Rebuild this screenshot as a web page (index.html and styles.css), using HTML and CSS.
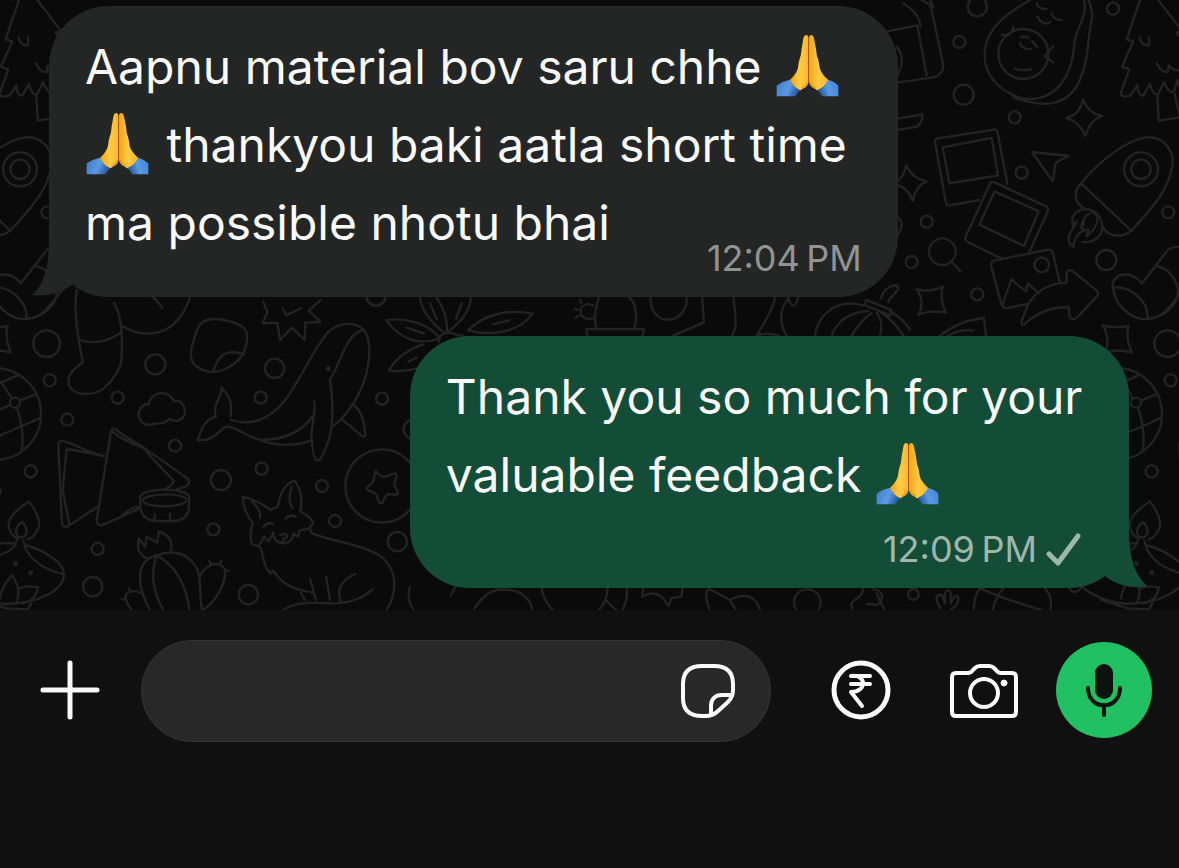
FILE: index.html
```html
<!DOCTYPE html>
<html lang="gu-Latn">
<head>
    <meta charset="UTF-8">
    <meta name="viewport" content="width=device-width, initial-scale=1.0">
    <title>Chat</title>
    <link rel="stylesheet" href="styles.css">
</head>
<body>
    <!-- shared shapes -->
    <svg class="defs" aria-hidden="true">
        <defs>
            <linearGradient id="skin" x1="0" y1="0" x2="1" y2="0">
                <stop offset="0" stop-color="#f5a214"/>
                <stop offset="0.5" stop-color="#ffcb45"/>
                <stop offset="1" stop-color="#fdb827"/>
            </linearGradient>
            <linearGradient id="sleeve-left" x1="0" y1="0" x2="1" y2="0.3">
                <stop offset="0" stop-color="#3f7ac9"/>
                <stop offset="0.6" stop-color="#5b9ae3"/>
                <stop offset="1" stop-color="#28589b"/>
            </linearGradient>
            <linearGradient id="sleeve-right" x1="1" y1="0" x2="0" y2="0.3">
                <stop offset="0" stop-color="#4580cf"/>
                <stop offset="0.6" stop-color="#5b9ae3"/>
                <stop offset="1" stop-color="#28589b"/>
            </linearGradient>
            <symbol id="folded-hands" viewBox="50 42 188 190">
                <path fill="url(#sleeve-left)" d="M51 197 Q70 184 93 179 L124 211 Q114 218 108 230 H51 Z"/>
                <path fill="url(#sleeve-right)" d="M237 197 Q223 184 205 179 L172 211 Q182 218 188 230 H237 Z"/>
                <path fill="url(#skin)" d="M132 53 Q134 44 141 45 Q147 46 147 55 L147 186 Q145 199 134 205 L123 212 Q100 202 92 180 C105 168 112 155 115 145 Q117 128 120 118 C124 108 125 100 126 88 Z"/>
                <path fill="url(#skin)" d="M163 53 Q161 44 154 45 Q148 46 148 55 L148 186 Q151 199 162 205 L173 212 Q196 202 206 180 C192 168 184 155 181 145 Q179 128 176 118 C172 108 171 100 170 88 Z"/>
                <path fill="none" stroke="#a55a08" stroke-width="3" stroke-linecap="round" d="M147 54 V184"/>
                <path fill="none" stroke="#e08a10" stroke-width="4" stroke-linecap="round" opacity="0.6" d="M143 188 Q139 200 127 205 M152 188 Q157 200 169 205"/>
            </symbol>
        </defs>
    </svg>

    <main class="chat">
        <svg class="wallpaper" viewBox="0 0 3537 1830" preserveAspectRatio="xMinYMin slice" aria-hidden="true">
            <g id="tile">
                <!-- stocking, sticker, cloud, whale -->
                <g transform="translate(0 870)">
                    <path d="M230 0 C220 70 235 150 249 217 C215 240 200 260 207 285 C216 312 260 318 295 305 C325 290 355 250 364 215 C368 140 366 80 342 38 M241 150 Q300 170 362 128 M365 108 C440 150 530 140 570 22 M440 10 Q470 25 487 54"/>
                    <path d="M610 95 C630 82 660 85 700 97 C735 108 745 125 741 150 C735 195 720 215 670 240 C640 252 600 245 580 220 C568 200 572 180 580 155 C588 130 592 105 610 95 Z M640 245 C655 190 680 178 733 192"/>
                    <path d="M790 36 L802 66 L788 100 L832 98 L840 150 L876 113 L914 150 L916 98 L962 96 L926 62 L962 30 M848 55 L858 76 L904 54"/>
                    <path d="M430 400 C405 380 415 345 446 342 C455 300 510 300 522 334 C555 325 570 380 535 392 C520 395 515 390 510 386 C490 405 470 400 470 400 C455 405 440 406 430 400 Z"/>
                    <path d="M693 390 C770 415 830 370 870 310 C910 250 945 170 985 125 C1020 95 1065 95 1092 120 C1120 160 1112 260 1060 340 C1040 370 1020 395 998 408 M1090 120 C1040 130 1025 210 990 270 M990 270 C1000 340 1005 420 975 480 C955 530 940 520 935 450 C930 410 950 370 942 335 M943 372 C905 430 850 450 780 450 C730 435 700 405 680 410 C650 425 640 455 592 450 C605 420 610 390 648 380 C635 350 665 320 665 292 C680 315 700 325 691 380 M780 450 C830 470 890 468 932 452 M1060 345 C1085 360 1095 400 1096 435 C1090 450 1075 425 1025 388"/>
                    <circle cx="985" cy="236" r="4"/>
                    <!-- paper, drum -->
                    <path d="M312 498 C270 490 220 460 185 452 Q174 452 175 468 L186 700 Q190 715 205 708 L290 652 M312 498 L200 476 L188 600 L208 704 M333 424 L290 690 Q290 710 310 704 L420 655 M333 424 Q338 412 350 420 C390 455 410 455 430 472 L562 565 Q572 578 560 588 L530 598 M338 426 C400 475 430 460 445 492 C480 530 500 550 520 570 C524 582 505 592 495 598 M360 684 Q390 650 420 650"/>
                    <path d="M420 622 C425 592 560 590 568 622 L566 660 Q560 692 520 693 H465 Q428 690 421 655 Z M428 632 C430 608 555 606 560 630 C555 655 435 655 428 632 M464 690 V672 M510 690 V670"/>
                    <!-- globe -->
                    <circle cx="-15" cy="372" r="138"/>
                    <circle cx="45" cy="338" r="15"/>
                    <path d="M-60 300 Q0 280 53 256 M0 274 Q22 300 36 326 M59 332 L104 314 M0 358 L32 345 M51 353 Q76 430 64 485 M-80 470 Q40 420 120 384"/>
                    <!-- oil lamp -->
                    <path d="M87 634 C50 660 25 680 26 710 C32 735 42 742 55 744 M87 634 C110 665 118 690 118 705 C110 735 95 745 82 748 M66 696 C45 710 42 735 60 742 C85 742 86 715 66 696 M50 750 C48 775 25 785 0 794 M70 752 C75 790 110 835 192 853 C190 815 130 780 75 765 M192 853 C190 900 120 940 20 942 M0 760 L45 760 M0 925 C5 890 20 875 36 856 C60 890 60 915 48 940 M58 895 C75 888 95 888 114 892 C108 925 90 935 66 940 M-60 930 L20 955 L84 958 L94 940 M-170 800 C-155 880 -80 935 20 942"/>
                    <circle cx="46" cy="820" r="4"/><circle cx="92" cy="848" r="4"/>
                    <!-- cactus -->
                    <path d="M445 806 C405 790 415 765 416 745 L436 770 L440 740 L472 758 L476 724 C510 735 520 760 512 782 M450 960 C405 880 410 810 470 796 C540 770 590 810 598 860 C602 900 600 930 606 960 C650 940 680 870 675 838 C655 810 620 820 598 860 M470 796 C450 850 460 910 490 960 M470 796 C530 830 560 890 568 960 M430 912 C400 895 370 905 378 930 Q385 950 396 960 M632 822 L628 812 M660 822 L664 812 M674 842 L686 842 M390 905 L388 895 M374 928 L364 928"/>
                    <!-- fox -->
                    <path d="M833 650 C840 610 855 580 884 572 C905 600 908 640 900 664 C920 675 938 690 940 700 L928 714 L936 730 M833 650 L810 660 C790 640 750 625 728 620 C730 660 745 680 758 700 C752 720 748 740 756 762 L776 770 L792 740 L806 754 L820 728 M875 590 C865 620 866 640 878 654 M755 635 C775 650 782 665 780 684 M790 712 Q800 694 818 702 M856 686 Q868 672 886 680 M820 728 C820 770 880 770 880 730 L895 740 L898 722 L928 716 M840 735 Q855 728 862 738 Q856 750 850 745 Q852 760 840 757 M776 768 C792 780 785 830 812 850 L820 842 C850 890 890 900 940 908 M936 730 C1000 755 1100 765 1150 805 C1195 850 1190 910 1160 960 M850 960 C890 930 950 940 1000 940 C1060 940 1100 915 1118 898 M930 866 L948 930 M978 860 L990 930 M1066 852 C1020 870 1010 905 1022 934 M903 908 L915 930"/>
                    <!-- star coin -->
                    <circle cx="1146" cy="588" r="110"/>
                    <path d="M1127 542 Q1140 562 1154 560 L1184 550 Q1194 552 1186 570 Q1180 584 1188 596 Q1200 614 1188 614 L1164 612 Q1152 622 1148 638 Q1136 644 1132 620 Q1128 606 1106 602 Q1092 596 1106 588 Q1122 578 1122 562 Z"/>
                    <circle cx="140" cy="161" r="40"/><circle cx="149" cy="271" r="18"/><circle cx="466" cy="223" r="30"/>
                    <circle cx="353" cy="323" r="18"/><circle cx="202" cy="389" r="18"/><circle cx="92" cy="544" r="18"/>
                    <circle cx="525" cy="467" r="18"/><circle cx="824" cy="235" r="29"/><circle cx="782" cy="323" r="18"/>
                    <circle cx="1146" cy="326" r="18"/><circle cx="663" cy="570" r="30"/><circle cx="785" cy="536" r="18"/>
                    <circle cx="966" cy="588" r="18"/><circle cx="1005" cy="693" r="18"/><circle cx="640" cy="718" r="18"/>
                    <circle cx="293" cy="777" r="18"/><circle cx="278" cy="890" r="29"/><circle cx="745" cy="914" r="29"/>
                    <circle cx="1192" cy="755" r="29"/><circle cx="1128" cy="18" r="29"/><circle cx="1240" cy="418" r="29"/>
                    <circle cx="-12" cy="604" r="14"/>
                </g>

                <!-- row between the two bubbles: leaves, pot, flask, pumpkin -->
                <g transform="translate(1140 855)">
                    <path d="M18 106 C80 95 150 120 180 160 C110 185 60 160 18 106 Z M80 128 L132 146 M195 145 C150 110 120 70 120 30 M165 30 C190 70 205 100 200 145 C240 110 275 80 272 30 M150 55 L170 102 M245 55 L228 102 M264 136 C310 90 380 70 458 86 C420 140 340 155 264 136 Z M338 118 L388 106 M178 172 C170 140 215 140 232 150 L246 152 M28 255 Q60 200 130 178 M28 257 Q90 262 140 240 M85 230 L110 218"/>
                    <path d="M648 128 C640 90 650 60 658 34 M745 34 C770 55 772 90 764 128 M622 152 L618 132 H792 L788 152 M640 62 C605 45 590 85 612 98 Q628 106 642 98 M604 55 L600 45 M594 74 L584 72 M596 92 L586 98"/>
                    <path d="M812 34 C805 130 925 125 920 34 M966 34 L972 112 L880 152 M1060 34 C1070 120 1070 130 1056 152 M1186 34 C1180 70 1155 110 1130 150 Q1170 142 1200 154 M1226 40 C1195 70 1200 120 1220 152 M1222 34 Q1240 90 1256 34"/>
                    <path d="M1305 152 C1315 80 1380 40 1450 62 M1355 152 C1370 110 1410 80 1465 78 M1415 152 Q1440 110 1474 84 M1490 84 C1510 110 1505 140 1500 152 M1500 80 Q1545 110 1570 152 M1530 80 Q1570 100 1590 135 M1458 44 L1536 76 L1530 92 L1454 60 Z M1503 40 C1510 10 1540 -5 1555 5 C1560 20 1530 30 1525 52"/>
                </g>

                <!-- row under the outgoing bubble -->
                <g transform="translate(1140 1740)">
                    <path d="M90 20 Q78 60 104 95 M225 22 L212 46 M280 92 Q310 40 350 30 Q440 20 458 90 M484 20 Q490 65 520 92 M684 20 Q680 70 655 90 M678 62 L710 92 M740 20 Q745 60 726 92 M790 25 L786 50 Q820 30 846 52 L866 78 L874 54 L904 50 L908 25 M988 90 Q968 30 990 28 L1050 60 Q1120 25 1140 90 M1050 60 L1068 90 M1418 88 C1400 55 1450 60 1450 25 M1480 28 C1510 30 1515 60 1490 75 L1462 72 M1490 40 L1512 88"/>
                    <circle cx="1282" cy="68" r="40"/>
                    <circle cx="1600" cy="43" r="16"/>
                    <path d="M1682 85 C1665 60 1665 40 1685 45 L1695 70 C1690 30 1705 20 1712 40 V70 C1725 35 1745 45 1730 75 L1705 95 M1782 95 Q1780 50 1800 25 Q1880 60 1985 90 M1838 92 Q1845 50 1870 25 M1995 25 Q2020 50 2010 95"/>
                    <circle cx="2085" cy="18" r="18"/>
                </g>

                <!-- right column: camera, pear, tree, photos, rocket -->
                <g transform="translate(2640 0)">
                    <path d="M70 10 Q118 40 122 80 M22 94 L112 76 L140 226 M122 -2 L152 16 L190 195 Q190 225 160 232 L50 248 M150 0 L160 20 M50 140 Q80 180 52 226 M52 356 L128 343 Q126 380 100 382 L52 390 M52 652 Q78 670 52 706"/>
                    <path d="M450 0 C390 35 320 80 315 150 C305 230 370 285 440 297 C530 300 575 230 582 140 C585 80 625 55 612 0 M400 292 C490 325 565 320 600 240 C630 160 620 130 635 60 Q640 30 625 0 M470 10 Q475 30 500 26 M472 50 Q490 80 510 66 M514 40 Q520 60 545 60 M366 104 L382 106 Q398 100 400 80 M520 138 L494 168 L520 187 M422 112 Q436 106 444 114 M420 128 Q425 150 455 146 M456 124 L472 140 M404 206 Q425 214 452 208"/>
                    <circle cx="430" cy="162" r="75"/>
                    <path d="M780 0 L740 118 L760 124 L726 200 L748 208 L722 280 Q725 295 752 286 L772 256 Q774 290 790 286 L810 252 Q820 292 836 280 L852 246 Q870 290 884 270 L892 240 Q905 290 930 270 M835 0 L905 92 L890 98 L940 160 M778 112 Q785 138 805 136 Q810 130 806 112 M830 190 Q845 220 864 216 L866 196 Q885 220 905 206 M832 284 L836 362 L940 346 M884 282 L900 350"/>
                    <path d="M609 298 Q625 340 666 348 Q630 360 616 408 Q600 365 558 354 Q600 345 609 298 Z M78 496 Q95 535 140 544 Q105 560 98 604 Q85 560 40 552 Q72 535 78 496 Z M456 456 L566 468 L527 488 L518 544 Z"/>
                    <path d="M170 416 L345 388 Q350 388 352 394 L382 552 M170 416 Q162 420 166 430 L198 610 Q200 618 210 616 L298 600 M188 442 L335 414 L354 526 L208 550 Z M333 546 Q340 544 350 550 L500 620 Q506 624 504 632 L448 756 M333 546 L256 712 Q254 722 262 726 L366 776 M344 574 L476 634 L432 738 L298 674 Z"/>
                    <path d="M540 850 L518 758 Q512 746 500 750 L342 782 Q330 788 334 800 L364 912 Q370 926 384 924 L440 912 M368 912 L394 838 L438 874 L444 850 L476 880 M428 974 Q420 970 430 950 C450 880 500 850 560 848 V818 Q562 808 576 812 L650 872 Q658 880 650 890 L590 954 Q572 962 568 948 L566 922 C510 920 470 940 436 970 Q432 976 428 974 Z"/>
                    <circle cx="485" cy="795" r="22"/><circle cx="187" cy="755" r="40"/><path d="M215 786 L242 814"/>
                    <path d="M603 550 C660 480 740 420 800 412 C850 408 880 450 878 490 C870 570 810 630 754 692 Q720 718 685 700 L665 680 M603 550 Q575 580 596 612 L612 626 M603 550 L752 690"/>
                    <circle cx="783" cy="508" r="51"/><circle cx="783" cy="508" r="29"/>
                    <path d="M630 628 C590 625 572 645 578 674 L590 664 C580 690 560 700 568 730 L580 740 C585 700 610 690 625 688 L620 708 Q650 690 654 650 L630 628 C665 640 675 680 660 705 Q640 730 608 726 M630 640 Q605 650 612 675 M610 660 Q595 690 618 690"/>
                    <path d="M700 870 C690 840 715 820 745 824 Q770 830 786 850 L865 748 Q890 735 925 742 M700 870 C710 930 770 965 810 956 C870 945 900 900 893 860 C880 825 855 800 826 798 M706 862 C760 860 805 910 803 952 M810 956 C860 950 880 900 915 866"/>
                    <path d="M110 868 Q150 878 188 860 Q178 895 198 938 Q150 930 116 944 Q136 905 110 868 Z M668 976 Q708 986 746 978 Q735 1010 756 1058 Q710 1045 676 1058 Q692 1015 668 976 Z M176 1010 Q240 960 312 954 L318 1010 M200 1010 Q240 985 278 992"/>
                    <circle cx="292" cy="20" r="29"/><circle cx="238" cy="126" r="18"/><circle cx="251" cy="284" r="30"/>
                    <circle cx="404" cy="352" r="18"/><circle cx="699" cy="26" r="18"/><circle cx="425" cy="518" r="18"/>
                    <circle cx="140" cy="665" r="18"/><circle cx="95" cy="786" r="18"/><circle cx="292" cy="883" r="18"/>
                    <circle cx="679" cy="780" r="30"/><circle cx="865" cy="637" r="18"/>
                </g>
            </g>
            <use href="#tile" x="-3363"/>
            <use href="#tile" x="3363"/>
        </svg>

        <article class="bubble incoming">
            <p>Aapnu material bov saru chhe <svg class="emoji" role="img" aria-label="🙏"><use href="#folded-hands"/></svg><br>
            <svg class="emoji" role="img" aria-label="🙏"><use href="#folded-hands"/></svg> thankyou baki aatla short time<br>
            ma possible nhotu bhai</p>
            <div class="meta"><time datetime="12:04">12:04&#8239;PM</time></div>
            <svg class="tail" viewBox="0 0 60 90" aria-hidden="true">
                <path d="M17 20 V32 C17 58 12 75 0 86 C16 88 28 83 39 77 L50 60 Z"/>
            </svg>
        </article>

        <article class="bubble outgoing">
            <p>Thank you so much for your<br>
            valuable feedback <svg class="emoji" role="img" aria-label="🙏"><use href="#folded-hands"/></svg></p>
            <div class="meta">
                <time datetime="12:09">12:09&#8239;PM</time>
                <svg class="check" viewBox="0 0 36 33" role="img" aria-label="Sent">
                    <path d="M4 21 L13 30 L33 3"/>
                </svg>
            </div>
            <svg class="tail" viewBox="0 0 60 90" aria-hidden="true">
                <path d="M42 10 V32 C42 58 48 75 60 86 C44 90 30 84 19 77 L8 60 Z"/>
            </svg>
        </article>
    </main>

    <form class="composer">
        <button type="button" class="icon-btn" aria-label="Attach">
            <svg class="bold" width="60" height="60" viewBox="0 0 60 60"><path d="M30 3 V57 M3 30 H57"/></svg>
        </button>
        <div class="field">
            <input type="text" aria-label="Message">
            <button type="button" class="icon-btn" aria-label="Stickers">
                <svg width="56" height="56" viewBox="0 0 56 56">
                    <path d="M22 3 H34 C47 3 53 9 53 21 V27 C53 32 52 35 48 39 L38 48 C34 52 30 53 25 53 H22 C9 53 3 47 3 35 V21 C3 9 9 3 22 3 Z M31 51 V43 C31 36 35 32 42 32 H52"/>
                </svg>
            </button>
        </div>
        <div class="actions">
            <button type="button" class="icon-btn" aria-label="Payment">
                <svg class="bold" width="60" height="60" viewBox="0 0 60 60">
                    <circle cx="30" cy="30" r="27"/>
                    <path class="rupee" d="M20 16 H39 M20 24 H39 M20 16 C36 14 36 32 20 32 L31 46"/>
                </svg>
            </button>
            <button type="button" class="icon-btn" aria-label="Camera">
                <svg width="70" height="60" viewBox="0 0 70 60">
                    <path d="M7 13 H19 Q22 13 24 10 L26 8 Q28 6 31 6 H40 Q43 6 45 8 L47 10 Q49 13 52 13 H63 Q67 13 67 17 V52 Q67 56 63 56 H7 Q3 56 3 52 V17 Q3 13 7 13 Z"/>
                    <circle cx="35" cy="33" r="14"/>
                    <circle class="dot" cx="55" cy="23" r="3"/>
                </svg>
            </button>
            <button type="button" class="mic" aria-label="Record voice message">
                <svg width="36" height="54" viewBox="0 0 36 54">
                    <rect x="9" y="1" width="18" height="35" rx="9"/>
                    <path d="M2 25 C2 48 34 48 34 25 M18 43 V52"/>
                </svg>
            </button>
        </div>
    </form>
</body>
</html>
```
FILE: styles.css
```css
* {
    box-sizing: border-box;
}
body {
    margin: 0;
    min-height: 100vh;
    display: flex;
    flex-direction: column;
    background-color: #101010;
    color: #fafafa;
    font-family: Inter, "Liberation Sans", sans-serif;
}
.defs {
    position: absolute;
    width: 0;
    height: 0;
}

/* messages */
.chat {
    position: relative;
    display: flex;
    flex-direction: column;
    gap: 39px;
    padding: 6px 50px 22px 49px;
    overflow: hidden;
    background-color: #0a0a0a;
}
.wallpaper {
    position: absolute;
    top: 0;
    left: 0;
    width: 100%;
    height: 100%;
    fill: none;
    stroke: #232323;
    stroke-width: 7;
    stroke-linecap: round;
    stroke-linejoin: round;
}
.bubble {
    position: relative;
    padding: 22px 36px 21px;
    border-radius: 60px;
}
.bubble p {
    margin: 0;
    font-size: 48px;
    line-height: 78px;
    white-space: nowrap;
}
.incoming {
    align-self: flex-start;
    width: 72vw;
    background-color: #242626;
}
.outgoing {
    align-self: flex-end;
    width: 61vw;
    padding-right: 48px;
    background-color: #144d37;
}
.emoji {
    width: 63px;
    height: 63px;
    margin: 0 4px 0 1px;
    vertical-align: -13px;
}
.meta {
    display: flex;
    justify-content: flex-end;
    align-items: center;
    gap: 8px;
    font-size: 36px;
    line-height: 36px;
}
.incoming .meta {
    margin-top: -22px;
    color: #929393;
}
.outgoing .meta {
    margin-top: 17px;
    color: #9fb6ad;
}
.check {
    width: 36px;
    height: 33px;
    fill: none;
    stroke: currentColor;
    stroke-width: 5;
    stroke-linecap: round;
    stroke-linejoin: round;
}
.tail {
    position: absolute;
    bottom: -2px;
    width: 60px;
    height: 90px;
}
.incoming .tail {
    left: -17px;
    fill: #242626;
}
.outgoing .tail {
    right: -18px;
    fill: #144d37;
}

/* message bar */
.composer {
    display: flex;
    align-items: center;
    gap: 41px;
    padding: 27px 27px 30px 40px;
}
.icon-btn,
.mic {
    flex: none;
    display: flex;
    align-items: center;
    justify-content: center;
    padding: 0;
    border: none;
    background: none;
    color: #fafafa;
    cursor: pointer;
}
.icon-btn svg {
    fill: none;
    stroke: currentColor;
    stroke-width: 4;
    stroke-linecap: round;
    stroke-linejoin: round;
}
.icon-btn svg.bold {
    stroke-width: 5;
}
.icon-btn .rupee {
    stroke-width: 4;
}
.icon-btn .dot {
    fill: currentColor;
    stroke-width: 1;
}
.field {
    flex: 1;
    display: flex;
    align-items: center;
    min-width: 0;
    height: 102px;
    margin-top: 3px;
    padding: 0 34px;
    border: 1px solid #343434;
    border-radius: 51px;
    background-color: #282828;
}
.field input {
    flex: 1;
    min-width: 0;
    border: none;
    outline: none;
    background: none;
    color: #fafafa;
    font: inherit;
    font-size: 48px;
}
.actions {
    display: flex;
    align-items: center;
    gap: 58px;
    padding-left: 19px;
}
.mic {
    width: 96px;
    height: 96px;
    margin-left: -21px;
    border-radius: 50%;
    background-color: #21c063;
    color: #0c120e;
}
.mic svg {
    fill: currentColor;
}
.mic path {
    fill: none;
    stroke: currentColor;
    stroke-width: 4;
    stroke-linecap: round;
}
```
